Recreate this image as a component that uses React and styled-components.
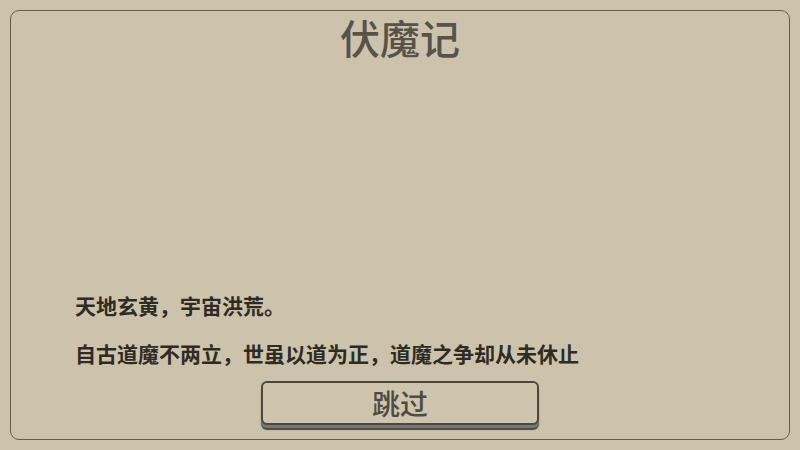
import React from "react";
import styled, { createGlobalStyle } from "styled-components";

const GlobalStyle = createGlobalStyle`
  html, body {
    margin: 0;
    padding: 0;
    background: #cdc3ad;
  }
  body {
    font-family: "Noto Sans CJK SC", "Noto Sans", sans-serif;
  }
`;

const Screen = styled.div`
  width: 800px;
  height: 450px;
  padding: 10px;
  box-sizing: border-box;
  background: #cdc3ad;
`;

const Panel = styled.div`
  height: 100%;
  box-sizing: border-box;
  border: 1.5px solid #6a5d45;
  border-radius: 9px;
  display: flex;
  flex-direction: column;
  align-items: stretch;
  padding-bottom: 9px;
`;

const Title = styled.h1`
  margin: 6px 0 0;
  text-align: center;
  font-size: 40px;
  line-height: 40px;
  font-weight: 500;
  color: #57534a;
`;

const Story = styled.div`
  margin-top: auto;
  padding-left: 64px;
  display: flex;
  flex-direction: column;
`;

const Line = styled.p`
  margin: 0;
  font-size: 21px;
  line-height: 48px;
  font-weight: 700;
  color: #2f2b23;
`;

const Footer = styled.div`
  display: flex;
  justify-content: center;
  padding-top: 4px;
`;

const SkipButton = styled.button`
  width: 278px;
  height: 44px;
  box-sizing: border-box;
  background: #cfc5af;
  border: 2px solid #4d483c;
  border-radius: 6px;
  box-shadow: 0 3px 0 #7a7874, 0 5px 1px #4a4a4a;
  font-family: "Noto Sans CJK SC", "Noto Sans", sans-serif;
  font-size: 28px;
  font-weight: 500;
  line-height: 1;
  color: #4f4b42;
  padding: 0;
  cursor: pointer;
  margin-bottom: 5px;
`;

export default function App() {
  return (
    <>
      <GlobalStyle />
      <Screen>
        <Panel>
          <Title>伏魔记</Title>
          <Story>
            <Line>天地玄黄，宇宙洪荒。</Line>
            <Line>自古道魔不两立，世虽以道为正，道魔之争却从未休止</Line>
          </Story>
          <Footer>
            <SkipButton>跳过</SkipButton>
          </Footer>
        </Panel>
      </Screen>
    </>
  );
}
